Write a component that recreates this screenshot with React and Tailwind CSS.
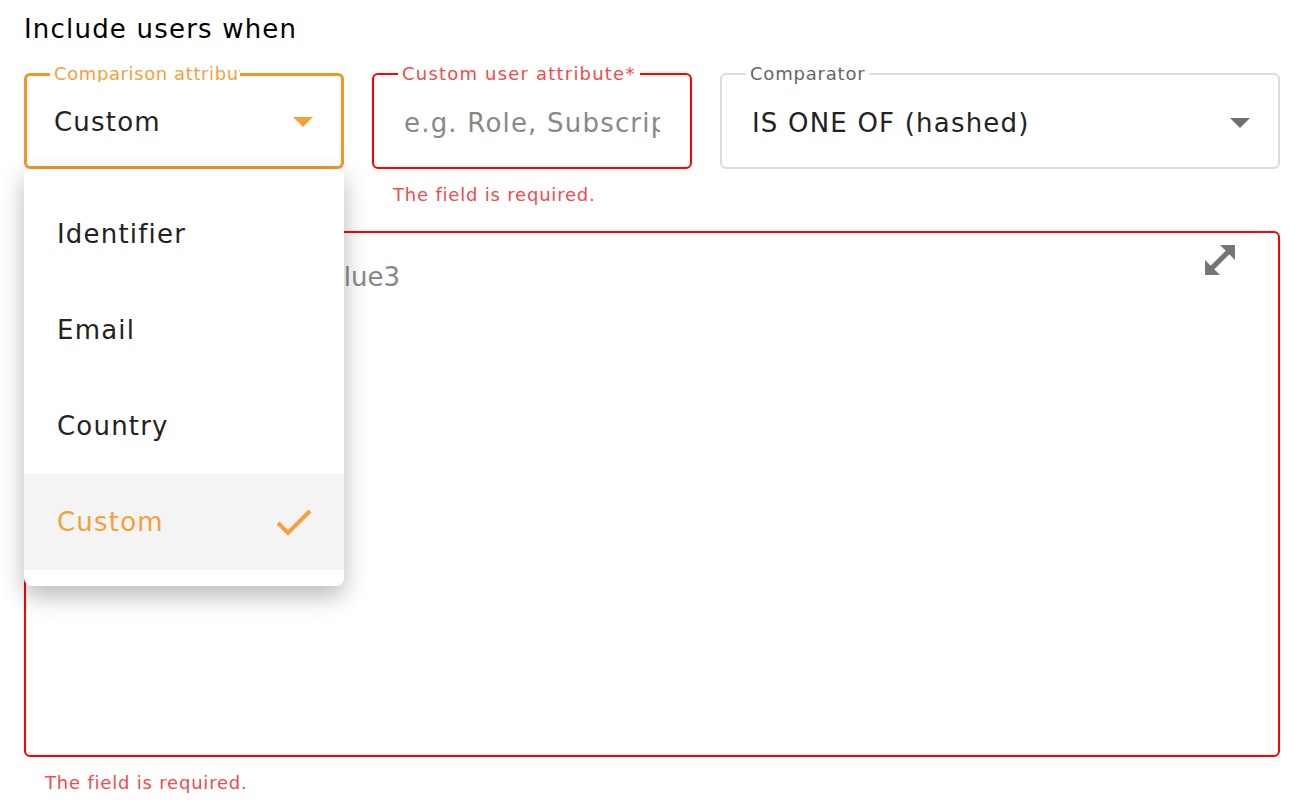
import { useState } from "react";

const ORANGE = "#f5a03a";

function ExpandIcon() {
    return (
        <svg width="30" height="30" viewBox="5 5 14 14" fill="#757575">
            <path d="M7.6 16.4l8.8-8.8" stroke="#757575" strokeWidth="2.4" />
            <path d="M19 5v7l-7-7z" />
            <path d="M5 19v-7l7 7z" />
        </svg>
    );
}

function Caret({ color }) {
    return (
        <svg width="20" height="10" viewBox="0 0 20 10">
            <path d="M0 0h20L10 10z" fill={color} />
        </svg>
    );
}

export default function App() {
    const [value, setValue] = useState("Custom");
    const options = ["Identifier", "Email", "Country", "Custom"];

    return (
        <div className="min-h-[810px] bg-white pl-6 pr-[34px] pt-[12px] text-[#222]" style={{ fontFamily: '"DejaVu Sans", sans-serif' }}>
            <h2 className="text-[26px] leading-[34px] tracking-[1.2px] text-black">Include users when</h2>

            <div className="mt-[28px] flex gap-7">
                {/* comparison attribute */}
                <div className="relative w-[320px] shrink-0">
                    <fieldset className="-mt-[8px] h-[103px] rounded-md border-[3px] border-[#f2962a] pl-[23px] pr-[28px]">
                        <legend className="max-w-[190px] overflow-hidden whitespace-nowrap px-[4px] text-[18px] leading-[16px] tracking-[0.6px] text-[#f5a03a]">Comparison attribute</legend>
                        <div className="flex h-[80px] items-center justify-between pl-[4px]">
                            <span className="text-[26px] tracking-[1.2px]">{value}</span>
                            <Caret color={ORANGE} />
                        </div>
                    </fieldset>

                    <ul className="absolute left-0 top-[95px] z-10 w-[320px] rounded-b-lg bg-white pt-[17px] pb-[16px] shadow-[0_10px_24px_rgba(0,0,0,0.28)]">
                        {options.map((o) => (
                            <li key={o} onClick={() => setValue(o)} className={`flex h-[96px] cursor-pointer items-center justify-between pl-[33px] pr-[32px] text-[26px] tracking-[1.2px] ${o === value ? "bg-[#f4f4f4] text-[#f5a03a]" : "text-[#222]"}`}>
                                {o}
                                {o === value && (
                                    <svg width="36" height="28" viewBox="0 0 36 28">
                                        <path d="M2 15l10 10L34 3" fill="none" stroke={ORANGE} strokeWidth="4" />
                                    </svg>
                                )}
                            </li>
                        ))}
                    </ul>
                </div>

                {/* custom user attribute */}
                <div className="w-[320px] shrink-0">
                    <fieldset className="-mt-[8px] h-[103px] min-w-0 rounded-md border-2 border-[#ff0000] pl-[24px] pr-[30px]">
                        <legend className="whitespace-nowrap px-[4px] text-[18px] leading-[16px] tracking-[1.2px] text-[#f54a4a]">Custom user attribute*</legend>
                        <input className="h-[82px] w-full min-w-0 pl-[6px] text-[26px] tracking-[1.2px] text-[#222] outline-none placeholder:text-[#888]" placeholder="e.g. Role, Subscription" />
                    </fieldset>
                    <p className="mt-[12px] pl-[21px] text-[18px] tracking-[0.8px] text-[#f54a4a]">The field is required.</p>
                </div>

                {/* comparator */}
                <div className="min-w-0 flex-1">
                    <fieldset className="-mt-[8px] h-[103px] rounded-md border-2 border-[#dddddd] pl-[24px] pr-[28px]">
                        <legend className="whitespace-nowrap px-[4px] text-[18px] leading-[16px] tracking-[0.8px] text-[#666]">Comparator</legend>
                        <div className="flex h-[82px] items-center justify-between pl-[6px]">
                            <span className="text-[26px] tracking-[1.2px]">IS ONE OF (hashed)</span>
                            <Caret color="#707070" />
                        </div>
                    </fieldset>
                </div>
            </div>

            {/* values */}
            <div className="mt-[23px]">
                <div className="relative h-[526px] rounded-md border-2 border-[#ff0000]">
                    <textarea className="h-full w-full resize-none rounded-md pl-[21px] pr-[28px] pt-[25px] text-[26px] text-[#222] outline-none placeholder:text-[#888]" placeholder="e.g. value1, value2, value3" />
                    <button className="absolute right-[43px] top-[12px]"><ExpandIcon /></button>
                </div>
                <p className="mt-[12px] pl-[21px] text-[18px] tracking-[0.8px] text-[#f54a4a]">The field is required.</p>
            </div>
        </div>
    );
}
